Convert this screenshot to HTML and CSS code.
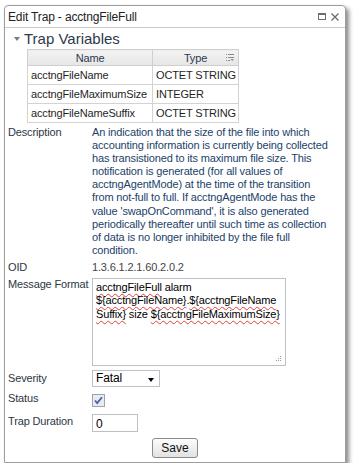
FILE: index.html
```html
<!DOCTYPE html>
<html>
<head>
    <title>Edit Trap</title>
    <link rel="stylesheet" href="styles.css">
</head>
<body>
    <div class="window">
        <div class="titlebar">
            <span class="title">Edit Trap - acctngFileFull</span>
            <span class="tools">
                <svg width="8" height="7" viewBox="0 0 8 7"><rect x="0.5" y="0.5" width="7" height="6" fill="none" stroke="#6d6d6d"/><line x1="0" y1="1.5" x2="8" y2="1.5" stroke="#6d6d6d"/></svg>
                <svg width="8" height="8" viewBox="0 0 8 8"><path d="M0.5 0.5 L7.5 7.5 M7.5 0.5 L0.5 7.5" stroke="#6d6d6d" stroke-width="1.3"/></svg>
            </span>
        </div>

        <div class="section-head">
            <span class="arrow"></span>
            <span>Trap Variables</span>
        </div>

        <table class="vars">
            <colgroup>
                <col class="col-name">
                <col class="col-type">
            </colgroup>
            <thead>
                <tr>
                    <th>Name</th>
                    <th class="th-type">Type
                        <svg class="col-menu" width="8" height="7" viewBox="0 0 8 7">
                            <path d="M0 0.5h1M2 0.5h6M0 3.5h1M2 3.5h6M0 6.5h1M2 6.5h2" stroke="#8a8a8a"/>
                            <path d="M4.5 5h3.5l-1.75 2z" fill="#8a8a8a"/>
                        </svg>
                    </th>
                </tr>
            </thead>
            <tbody>
                <tr><td>acctngFileName</td><td>OCTET STRING</td></tr>
                <tr><td>acctngFileMaximumSize</td><td>INTEGER</td></tr>
                <tr><td>acctngFileNameSuffix</td><td>OCTET STRING</td></tr>
            </tbody>
        </table>

        <div class="form">
            <div class="row row-desc">
                <label>Description</label>
                <div class="desc">An indication that the size of the file into which<br>accounting information is currently being collected<br>has transistioned to its maximum file size. This<br>notification is generated (for all values of<br>acctngAgentMode) at the time of the transition<br>from not-full to full. If acctngAgentMode has the<br>value 'swapOnCommand', it is also generated<br>periodically thereafter until such time as collection<br>of data is no longer inhibited by the file full<br>condition.</div>
            </div>
            <div class="row row-oid">
                <label>OID</label>
                <div class="oid">1.3.6.1.2.1.60.2.0.2</div>
            </div>
            <div class="row row-msg">
                <label>Message Format</label>
                <div class="textarea">
                    <span class="typo">acctngFileFull</span> alarm<br><span class="typo">${acctngFileName}</span>.<span class="typo">${acctngFileName</span><br><span class="typo">Suffix}</span> size <span class="typo">${acctngFileMaximumSize}</span>
                    <svg class="grip" width="6" height="6" viewBox="0 0 6 6"><path d="M4 0h1v1h-1zM2 2h1v1h-1zM4 2h1v1h-1zM0 4h1v1h-1zM2 4h1v1h-1zM4 4h1v1h-1z" fill="#9a9a9a"/></svg>
                </div>
            </div>
            <div class="row row-sev">
                <label>Severity</label>
                <div class="select">Fatal<span class="caret"></span></div>
            </div>
            <div class="row row-status">
                <label>Status</label>
                <svg class="check" width="13" height="13" viewBox="0 0 13 13">
                    <rect x="0.5" y="0.5" width="12" height="12" fill="#e8ebf2" stroke="#9ea3ad"/>
                    <path d="M3 6.5 L5.2 9 L10 3.2" fill="none" stroke="#4b5fa3" stroke-width="1.8"/>
                </svg>
            </div>
            <div class="row row-dur">
                <label>Trap Duration</label>
                <div class="input">0</div>
            </div>
            <div class="actions">
                <button class="save">Save</button>
            </div>
        </div>
    </div>
</body>
</html>
```

FILE: styles.css
```css
body {
    margin: 0;
    background: #fff;
    font-family: "Liberation Sans", Arial, sans-serif;
    font-size: 11px;
    letter-spacing: -0.15px;
    color: #2d3645;
}

.window {
    width: 340px;
    height: 456px;
    margin: 5px 0 0 4px;
    border: 1px solid #9d9d9d;
    border-radius: 4px 4px 0 0;
    background: #fff;
    box-shadow: 3px 3px 4px rgba(0,0,0,0.45);
}

.titlebar {
    display: flex;
    align-items: center;
    justify-content: space-between;
    height: 21px;
    padding: 0 6px 0 3px;
    border-bottom: 1px solid #c9c9c9;
    font-size: 12px;
    color: #222;
}

.tools {
    display: flex;
    align-items: center;
    gap: 5px;
}

.section-head {
    display: flex;
    align-items: center;
    height: 21px;
    padding-left: 9px;
    font-size: 15px;
    letter-spacing: 0;
    color: #2d3a4c;
}

.arrow {
    width: 0;
    height: 0;
    margin: 1px 4px 0 0;
    border-left: 3.5px solid transparent;
    border-right: 3.5px solid transparent;
    border-top: 4px solid #7a7a7a;
}

.vars {
    width: 211px;
    margin: 0 0 0 22px;
    border-collapse: collapse;
    table-layout: fixed;
    color: #1f1f1f;
}

.col-name {
    width: 125px;
}

.col-type {
    width: 86px;
}

.vars th, .vars td {
    border: 1px solid #d3d3d3;
    padding: 0 3px;
    text-align: left;
    font-weight: normal;
    white-space: nowrap;
    overflow: hidden;
}

.vars th {
    height: 15px;
    background: linear-gradient(#f3f3f3, #e6e6e6);
    border-color: #cfcfcf;
    color: #2b3a52;
    text-align: center;
}

.vars td {
    height: 18px;
}

.th-type {
    position: relative;
}

.col-menu {
    position: absolute;
    right: 4px;
    top: 4px;
}

.form {
    padding: 3px 0 0 3px;
}

.row {
    display: flex;
    align-items: flex-start;
}

.row label {
    width: 84px;
    flex-shrink: 0;
    line-height: 13px;
    white-space: nowrap;
}

.desc {
    line-height: 13.1px;
    white-space: nowrap;
    color: #223f6a;
}

.row-oid {
    margin-top: 4px;
}

.oid {
    line-height: 13px;
    color: #444;
}

.row-msg {
    margin-top: 4px;
}

.textarea {
    position: relative;
    width: 186px;
    height: 84px;
    padding: 2px 3px 0;
    border: 1px solid #bcc0c9;
    line-height: 13.5px;
    white-space: nowrap;
    color: #000;
}

.typo {
    text-decoration: underline wavy #e0403a;
    text-decoration-thickness: 1px;
    text-underline-offset: 2px;
}

.grip {
    position: absolute;
    right: 3px;
    bottom: 3px;
}

.row-sev {
    margin-top: 4px;
    align-items: center;
}

.select {
    position: relative;
    width: 60px;
    height: 15px;
    padding: 0 3px;
    border: 1px solid #bcc0c9;
    line-height: 15px;
    font-size: 12px;
    color: #000;
}

.caret {
    position: absolute;
    right: 5px;
    top: 7px;
    border-left: 3.5px solid transparent;
    border-right: 3.5px solid transparent;
    border-top: 4px solid #000;
}

.row-status {
    margin-top: 7px;
}

.row-status label {
    margin-top: -2px;
}

.check {
    display: block;
}

.row-dur {
    margin-top: 7px;
}

.row-dur label {
    margin-top: 1px;
}

.input {
    width: 38px;
    height: 16px;
    padding: 0 3px;
    border: 1px solid #bcc0c9;
    line-height: 18px;
    font-size: 12px;
    color: #000;
}

.actions {
    display: flex;
    padding-left: 144px;
    margin-top: 6px;
}

.save {
    width: 46px;
    height: 20px;
    padding: 0;
    border: 1px solid #8b8b8b;
    border-radius: 3px;
    background: linear-gradient(#fdfdfd, #e2e2e2);
    font-family: "Liberation Sans", Arial, sans-serif;
    font-size: 12px;
    color: #111;
}
```
